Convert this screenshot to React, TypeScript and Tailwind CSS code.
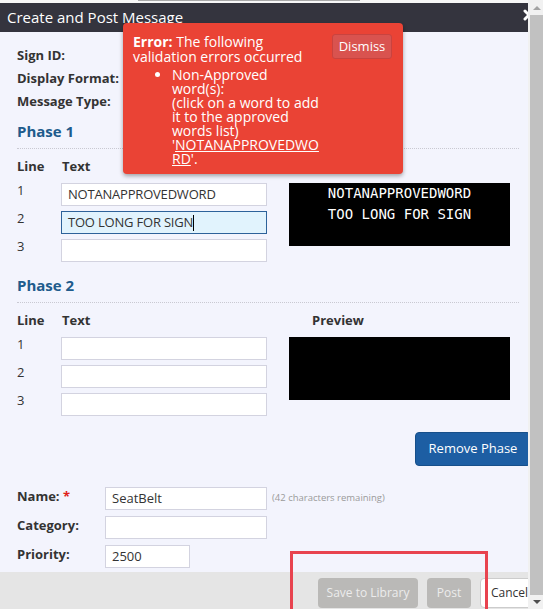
import { X } from "lucide-react";

const font = { fontFamily: '"Open Sans", "Noto Sans", sans-serif' };

function TextRow({ n, value, focused }: { n: number; value?: string; focused?: boolean }) {
  return (
    <div className="flex items-start h-[23px]">
      <span className="w-[44px] text-[13px] leading-[14px] text-[#333]">{n}</span>
      <div
        className={`w-[206px] h-[23px] border flex items-center px-[6px] text-[13px] tracking-[-0.2px] text-[#333] ${
          focused ? "bg-[#e1f3fd] border-[#2d629a]" : "bg-white border-[#d3d3e0]"
        }`}
      >
        {value}
        {focused && <span className="inline-block w-px h-[16px] bg-black" />}
      </div>
    </div>
  );
}

function Phase({ title, lines }: { title: string; lines: string[] }) {
  return (
    <div>
      <div className="mr-[12px] h-[28px] border-b border-dotted border-[#c9c9d2]">
        <h3 className="text-[15px] leading-[20px] font-bold text-[#205b8c]">{title}</h3>
      </div>
      <div className="flex mt-[8px] h-[20px] items-center text-[13px] font-bold text-[#333]">
        <span className="w-[45px]">Line</span>
        <span className="w-[250px]">Text</span>
        <span>Preview</span>
      </div>
      <div className="flex mt-[6px] gap-[22px]">
        <div className="flex flex-col gap-[5px]">
          <TextRow n={1} value={lines[0]} />
          <TextRow n={2} value={lines[1]} focused={lines[1] !== ""} />
          <TextRow n={3} value={lines[2]} />
        </div>
        <div
          className="w-[221px] h-[63px] bg-black text-white text-center text-[14px] leading-[21px]"
          style={{ fontFamily: '"DejaVu Sans Mono", monospace' }}
        >
          {lines[0] && <div>{lines[0]}</div>}
          {lines[1] && <div>{lines[1]}</div>}
        </div>
      </div>
    </div>
  );
}

export default function App() {
  return (
    <div className="relative w-[543px] h-[609px] flex overflow-hidden bg-[#f5f5f5]" style={font}>
      <div className="w-[528px] h-full overflow-hidden flex flex-col">
        <div className="w-[546px] h-full flex flex-col">
          <div className="h-[3px] bg-[#f7f7f7]">
            <div className="ml-[138px] w-[222px] h-px bg-[#a9a9a9]" />
          </div>
          <div className="relative h-[29px] bg-[#34343e] flex items-center px-[7px] text-white text-[15px]">
            Create and Post Message
            <X className="absolute right-[9px] top-[4px] w-[16px] h-[16px] text-white" strokeWidth={4.5} />
          </div>

          <div className="flex-1 bg-[#f3f4fd] pl-[17px] pr-[15px] pt-[12px]">
            <div className="flex flex-col text-[13px] font-bold text-[#333]">
              <div className="h-[23px] flex items-center">Sign ID:</div>
              <div className="h-[23px] flex items-center">Display Format:</div>
              <div className="h-[23px] flex items-center">Message Type:</div>
            </div>

            <div className="mt-[8px]">
              <Phase title="Phase 1" lines={["NOTANAPPROVEDWORD", "TOO LONG FOR SIGN", ""]} />
            </div>
            <div className="mt-[13px]">
              <Phase title="Phase 2" lines={["", "", ""]} />
            </div>

            <div className="flex justify-end mt-[16px]">
              <button className="h-[34px] w-[116px] rounded-[4px] bg-[#1d5ea3] border border-[#174f8a] text-white text-[13px]">
                Remove Phase
              </button>
            </div>

            <div className="flex flex-col gap-[6px] mt-[21px] text-[13px] text-[#333]">
              <div className="flex items-start h-[23px]">
                <span className="w-[88px] font-bold leading-[18px]">
                  Name: <span className="text-[#e0201a]">*</span>
                </span>
                <div className="w-[162px] h-[23px] bg-white border border-[#d3d3e0] flex items-center px-[6px]">
                  SeatBelt
                </div>
                <span className="ml-[5px] self-center text-[9.5px] text-[#9a9a9a]">(42 characters remaining)</span>
              </div>
              <div className="flex items-start h-[23px]">
                <span className="w-[88px] font-bold leading-[18px]">Category:</span>
                <div className="w-[162px] h-[23px] bg-white border border-[#d3d3e0]" />
              </div>
              <div className="flex items-start h-[23px]">
                <span className="w-[88px] font-bold leading-[18px]">Priority:</span>
                <div className="w-[85px] h-[23px] bg-white border border-[#d3d3e0] flex items-center px-[6px]">
                  2500
                </div>
              </div>
            </div>
          </div>

          <div className="h-[37px] shrink-0 bg-[#e5e5e5] flex justify-end items-start gap-[9px] pt-[6px]">
            <button className="w-[100px] h-[30px] rounded-[4px] bg-[#bab9b7] text-[#ececec] text-[12px]">
              Save to Library
            </button>
            <button className="w-[44px] h-[30px] rounded-[4px] bg-[#bab9b7] text-[#ececec] text-[12px]">
              Post
            </button>
            <button className="w-[66px] h-[30px] rounded-[4px] bg-white border border-[#cccccc] text-[#333] text-[12px] text-left pl-[10px]">
              Cancel
            </button>
          </div>
        </div>
      </div>

      {/* scrollbar */}
      <div className="w-[15px] h-full bg-[#f1f1f1] flex flex-col items-end">
        <div className="h-[15px] w-[13px] flex items-center justify-center">
          <div className="w-0 h-0 border-l-[4px] border-r-[4px] border-b-[4px] border-l-transparent border-r-transparent border-b-[#a3a3a3]" />
        </div>
        <div className="flex-1 w-[13px] bg-[#c1c1c1]" />
        <div className="h-[14px] w-[13px] flex items-center justify-center">
          <div className="w-0 h-0 border-l-[4px] border-r-[4px] border-t-[4px] border-l-transparent border-r-transparent border-t-[#505050]" />
        </div>
      </div>

      {/* validation popup */}
      <div className="absolute left-[123px] top-[23px] w-[280px] h-[151px] bg-[#ea4335] rounded-[4px] shadow-[0_2px_4px_rgba(0,0,0,0.35)] flex pl-[10px] pr-[11px] pt-[11px] text-white text-[14px] leading-[15px]">
        <div className="w-[187px] break-words">
          <p>
            <span className="font-bold">Error:</span> The following validation errors occurred
          </p>
          <ul className="mt-[4px] pl-[39px] list-disc leading-[14px]">
            <li>
              Non-Approved word(s):
              <br />
              (click on a word to add it to the approved words list)
              <br />
              '<span className="underline">NOTANAPPROVEDWORD</span>'.
            </li>
          </ul>
        </div>
        <button className="ml-auto w-[60px] h-[25px] rounded-[3px] bg-[#d9534f] border border-[#c9433f] text-white text-[13px]">
          Dismiss
        </button>
      </div>

      {/* annotation */}
      <div className="absolute left-[290px] top-[551px] w-[198px] h-[70px] border-[3px] border-[#e8434f]" />
    </div>
  );
}
